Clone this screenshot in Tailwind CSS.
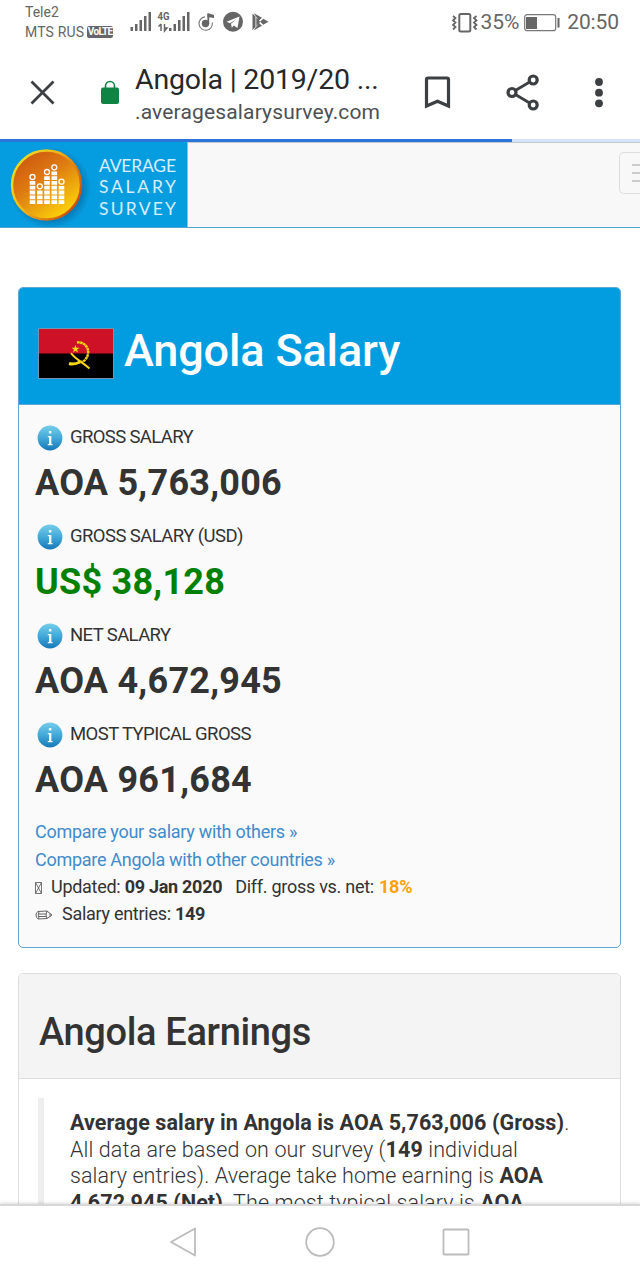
<!DOCTYPE html>
<html lang="en">
<head>
    <meta charset="UTF-8">
    <meta name="viewport" content="width=device-width, initial-scale=1.0">
    <title>Angola | 2019/20 Average Salary Survey</title>
    <script src="https://cdn.jsdelivr.net/npm/@tailwindcss/browser@4"></script>
</head>
<body class="bg-white font-[Roboto,sans-serif] text-[#333] whitespace-nowrap">
<!-- Shared info icon -->
<svg class="absolute w-0 h-0"><defs>
    <linearGradient id="ball" x1="0" y1="0" x2="0" y2="1"><stop offset="0" stop-color="#74cdea"/><stop offset=".5" stop-color="#43a9d8"/><stop offset="1" stop-color="#1678b8"/></linearGradient>
    <symbol id="info" viewBox="0 0 26 26"><circle cx="13" cy="13" r="12.400" fill="url(#ball)"/><path fill="#eef8fc" d="M11.900 6h2.500v2.600h-2.500zM10.800 11h3.600v8h1.200v1.300h-4.800V19h1.200v-6.700h-1.200z"/></symbol>
</defs></svg>
<div class="w-[640px] h-[1280px] flex flex-col overflow-hidden">

    <!-- Status bar -->
    <div class="h-11 shrink-0 flex text-[#666]">
        <div class="w-[130px] pl-[25px] pt-[2px] text-[14px] leading-5">
            <div>Tele2</div>
            <div class="flex items-center gap-[3px]">
                <span class="tracking-[0.15px]">MTS RUS</span>
                <span class="w-[26px] h-3 rounded-[2px] bg-[#666] text-white text-[10px] leading-3 font-bold text-center tracking-[-0.7px]">VoLTE</span>
            </div>
        </div>
        <svg class="w-[150px] h-11" viewBox="130 0 150 44" fill="#666">
            <path d="M130.500 27h2.500v4h-2.500zM135 24h2.500v7H135zM139.500 20h2.500v11h-2.500zM144 16h2.500v15h-2.500zM148.500 12h2.500v19h-2.500z"/>
            <text x="157.500" y="20" font-size="11.500" font-weight="700" textLength="12" lengthAdjust="spacingAndGlyphs">4G</text>
            <path d="M161 24v7M158.500 26.500l2.500-2.500M164.500 24v7l2.500-3h-2.500" fill="none" stroke="#666" stroke-width="1.500"/>
            <path d="M169 28h2.500v3H169zM173.500 24h2.500v7h-2.500zM178 20h2.500v11H178zM182.500 16h2.500v15h-2.500zM187 12h2.500v19H187z"/>
            <circle cx="205.500" cy="23.500" r="3.700"/>
            <path d="M208.300 24V14" fill="none" stroke="#666" stroke-width="1.800"/>
            <path d="M207.500 13l6.500 2v3l-6.500-1z"/>
            <path d="M205 16.900a6.700 6.700 0 1 0 7.300 5.500" fill="none" stroke="#777" stroke-width="1.100"/>
            <circle cx="233" cy="21.700" r="10"/>
            <path d="M226.500 21.800l13-5.300-2 11.500-3.700-2.500-2 2.200-.8-4 5.500-4.500-6.500 4z" fill="#fff"/>
            <path d="M252.500 13.500v16.500l3-3V16.500zM253.500 13l8.500 4.800-3 2.700zM253.500 30.500l8.500-4.800-3-2.700zM263.200 18.700l5.300 3-5.300 3-3-3zM256.300 17.500l4 4.200-4 4.300z"/>
        </svg>
        <div class="ml-auto mr-[21px] pt-px flex items-center text-[21px] tracking-[-0.1px]">
            <svg class="w-[27px] h-6" viewBox="449 10 27 24" fill="none" stroke="#666">
                <rect x="457.300" y="13" width="11" height="17.500" rx="1.500" stroke-width="2"/>
                <path d="M451 15l2.500 2-2.500 2.500 2.500 2-2.500 2.500 2.500 2-2.500 2.500M474.500 15l-2.500 2 2.500 2.500-2.500 2 2.500 2.500-2.500 2 2.500 2.500" stroke-width="1.800"/>
            </svg>
            <span class="ml-[3px]">35%</span>
            <svg class="w-9 h-[18px] ml-[5px]" viewBox="0 0 36 18">
                <rect x=".7" y=".7" width="31" height="16" rx="2.500" fill="none" stroke="#777" stroke-width="1.200"/>
                <path fill="#666" d="M2 3h11v12H2zM33.500 4h2v9.500h-2z"/>
            </svg>
            <span class="ml-[7px]">20:50</span>
        </div>
    </div>

    <!-- Browser toolbar -->
    <div class="h-[95px] shrink-0 flex text-[#3c4043]">
        <svg class="w-[135px] h-[95px]" viewBox="0 44 135 95">
            <path d="M31.500 81.500l22 22M53.500 81.500l-22 22" stroke="#3c4043" stroke-width="2.800"/>
            <rect x="101" y="87.500" width="18" height="16.500" rx="2" fill="#0d8443"/>
            <path d="M105.500 88v-2a4.500 4.500 0 0 1 9 0v2" fill="none" stroke="#0d8443" stroke-width="1.600"/>
        </svg>
        <div class="w-[265px] pt-[18px]">
            <div class="text-[28.500px] leading-[35px] tracking-[-0.2px] text-[#26282b]">Angola | 2019/20 ...</div>
            <div class="text-[21px] leading-[30px] tracking-[0.15px] text-[#4d5054]">.averagesalarysurvey.com</div>
        </div>
        <svg class="w-[240px] h-[95px]" viewBox="400 44 240 95" fill="none" stroke="#3c4043">
            <path d="M426.500 106V79.500q0-1.500 1.500-1.500h19q1.500 0 1.500 1.500V106l-11-4.800z" stroke-width="3.200"/>
            <path d="M533 80l-21 12.500L533 105" stroke-width="2.800"/>
            <g fill="#fff" stroke-width="3.200"><circle cx="533.200" cy="80" r="4"/><circle cx="512" cy="92.500" r="4"/><circle cx="533.200" cy="105" r="4"/></g>
            <g fill="#3c4043" stroke="none"><circle cx="599" cy="82" r="3.900"/><circle cx="599" cy="92.700" r="3.900"/><circle cx="599" cy="103.300" r="3.900"/></g>
        </svg>
    </div>
    <div class="h-[3px] shrink-0 bg-[#d2e3fa]"><div class="h-full w-[512px] bg-[#2b74d9]"></div></div>

    <!-- Page -->
    <div class="h-[1062px] shrink-0 overflow-hidden">
        <div class="h-[86px] flex bg-[#f8f8f8] border-b border-[#4fa3cf] border-t border-t-[#c5c8cc]">
            <div class="w-[188px] -mt-px bg-[#069de0] border-r border-[#7fc4e4]">
                <svg class="w-[187px] h-[85px]" viewBox="0 142 187 85">
                    <defs>
                        <linearGradient id="coin" x1=".1" y1="0" x2=".8" y2="1"><stop offset="0" stop-color="#c9500f"/><stop offset=".45" stop-color="#df7d12"/><stop offset="1" stop-color="#ffdd08"/></linearGradient>
                        <linearGradient id="rim" x1="0" y1="0" x2="1" y2=".6"><stop offset="0" stop-color="#e4ee20"/><stop offset=".5" stop-color="#f0b51c"/><stop offset="1" stop-color="#d0520d"/></linearGradient>
                        <radialGradient id="shade"><stop offset=".75" stop-color="#055f94" stop-opacity=".6"/><stop offset="1" stop-color="#055f94" stop-opacity="0"/></radialGradient>
                    </defs>
                    <circle cx="50" cy="188" r="41" fill="url(#shade)"/>
                    <circle cx="46.500" cy="185" r="34.500" fill="url(#coin)" stroke="url(#rim)" stroke-width="2.400"/>
                    <g stroke="#fff" stroke-width="5.600" stroke-dasharray="3.800 1">
                        <path d="M32.500 204v-23M39.800 204v-14M47 204v-28M54.300 204v-33M61.500 204v-18"/>
                    </g>
                    <g fill="none" stroke="#fff" stroke-width="1.300"><circle cx="32.500" cy="177" r="2.500"/><circle cx="39.800" cy="186.300" r="2.500"/><circle cx="47" cy="172" r="2.500"/><circle cx="54.300" cy="167.300" r="2.500"/><circle cx="61.500" cy="181.700" r="2.500"/></g>
                    <g fill="#d5effb" font-family="Lato" font-size="17.500">
                        <text x="99" y="172" textLength="77">AVERAGE</text>
                        <text x="99" y="193" textLength="77">SALARY</text>
                        <text x="99" y="214.500" textLength="77">SURVEY</text>
                    </g>
                </svg>
            </div>
            <div class="ml-auto mt-[9px] w-[21px] h-[42px] border border-r-0 border-[#ddd] rounded-l-[5px] pl-3 flex flex-col justify-center gap-[6px]">
                <div class="h-[2px] bg-[#ccc]"></div>
                <div class="h-[2px] bg-[#ccc]"></div>
                <div class="h-[2px] bg-[#ccc]"></div>
            </div>
        </div>

        <!-- Salary panel -->
        <div class="mt-[59px] ml-[18px] w-[603px] h-[661px] border border-[#61a5d4] rounded-[5px] bg-[#fafafa] overflow-hidden">
            <div class="h-[117px] pl-[19px] pt-[8px] flex items-center bg-[#029de1] border-b border-[#61a5d4]">
                <svg class="w-[76px] h-[51px] mt-[6px]" viewBox="0 0 76 51">
                    <rect x=".5" y=".5" width="75" height="50" stroke="#7396ad"/>
                    <path fill="#ce1127" d="M1 1h74v24.500H1z"/>
                    <g fill="none" stroke="#f9d616">
                        <path d="M39 14.500c7-1 12 5 11 11-.8 6-5 9.500-10 8.500" stroke-width="2.400" stroke-dasharray="2.600 .5"/>
                        <path d="M33 25c4 6 10 8 18.500 15.500" stroke-width="2"/>
                        <path d="M31 35.500q5 1.500 11-1.500" stroke-width="3"/>
                    </g>
                    <path fill="#f9d616" d="M37.500 17l1 2.700 3 .1-2.400 1.800.9 2.900-2.500-1.700-2.500 1.700.9-2.900-2.400-1.800 3-.1z"/>
                </svg>
                <h1 class="ml-[10px] mt-[2px] text-[45px] leading-[54px] font-medium tracking-[-0.15px] text-white">Angola Salary</h1>
            </div>

            <div class="pl-4 pt-4">
                <div class="h-[98.9px]">
                    <div class="h-8 flex pl-[2px]"><svg class="w-[26px] h-[26px] mt-1"><use href="#info"/></svg><span class="ml-[7px] text-[18.5px] leading-8 tracking-[-0.63px]">GROSS SALARY</span></div>
                    <div class="mt-[8px] text-[36px] leading-[44px] font-bold tracking-[0.25px]">AOA 5,763,006</div>
                </div>
                <div class="h-[98.9px]">
                    <div class="h-8 flex pl-[2px]"><svg class="w-[26px] h-[26px] mt-1"><use href="#info"/></svg><span class="ml-[7px] text-[18.5px] leading-8 tracking-[-0.57px]">GROSS SALARY (USD)</span></div>
                    <div class="mt-[8px] text-[36px] leading-[44px] font-bold tracking-[0.25px] text-[#008000]">US$ 38,128</div>
                </div>
                <div class="h-[98.9px]">
                    <div class="h-8 flex pl-[2px]"><svg class="w-[26px] h-[26px] mt-1"><use href="#info"/></svg><span class="ml-[7px] text-[18.5px] leading-8 tracking-[-0.6px]">NET SALARY</span></div>
                    <div class="mt-[8px] text-[36px] leading-[44px] font-bold tracking-[0.25px]">AOA 4,672,945</div>
                </div>
                <div class="h-[98.9px]">
                    <div class="h-8 flex pl-[2px]"><svg class="w-[26px] h-[26px] mt-1"><use href="#info"/></svg><span class="ml-[7px] text-[18.5px] leading-8 tracking-[-0.57px]">MOST TYPICAL GROSS</span></div>
                    <div class="mt-[8px] text-[36px] leading-[44px] font-bold tracking-[0.25px]">AOA 961,684</div>
                </div>
                <div class="text-[18px] leading-[27.3px] pt-[1.8px] tracking-[-0.28px]">
                    <div class="text-[#428bca]">Compare your salary with others »</div>
                    <div class="text-[#428bca]">Compare Angola with other countries »</div>
                    <div class="flex items-center">
                        <svg class="w-[7px] h-3 mr-[9px] mt-[3px]" viewBox="0 0 7 12" fill="none" stroke="#555" stroke-width=".8"><path d="M.5.5h6v11h-6zM.5.5l6 11M6.500.5l-6 11"/></svg>
                        <span>Updated: <b>09 Jan 2020</b></span><span class="ml-[13px]">Diff. gross vs. net: <b class="ml-px text-[#ffa10a]">18%</b></span>
                    </div>
                    <div class="flex items-center">
                        <svg class="w-[18px] h-3 mr-[9px] mt-[3px]" viewBox="0 0 18 12" fill="none" stroke="#555" stroke-width=".9"><path d="M3 2.500l9-.5 5 4-5 3.500-9 .5Q1 8.500 1 6t2-3.500zM4 2.500Q2.500 6 4 9.500M12 2q-2 4 0 7.500M4 5h7M4 7.500h7M15 4.500v3"/></svg>
                        <span>Salary entries: <b>149</b></span>
                    </div>
                </div>
            </div>
        </div>

        <!-- Earnings panel -->
        <div class="mt-[25px] ml-[18px] w-[603px] h-[400px] border border-[#ddd] rounded-[5px]">
            <div class="h-[105px] pl-5 pt-[30px] bg-[#f4f4f4] border-b border-[#ddd] rounded-t-[4px]">
                <h2 class="text-[38px] leading-[56px] font-medium tracking-[-0.35px]">Angola Earnings</h2>
            </div>
            <div class="mt-[19px] ml-[19px] h-[280px] border-l-[6px] border-[#eee] pl-[26px] pt-[12px] text-[21.500px] leading-[26.6px] font-light tracking-[0.1px]">
                <div><b class="font-bold">Average salary in Angola is AOA 5,763,006 (Gross)</b>.</div>
                <div>All data are based on our survey (<b class="font-bold">149</b> individual</div>
                <div>salary entries). Average take home earning is <b class="font-bold">AOA</b></div>
                <div><b class="font-bold">4,672,945 (Net)</b>. The most typical salary is <b class="font-bold">AOA</b></div>
            </div>
        </div>
    </div>

    <!-- Navigation bar -->
    <div class="h-[76px] shrink-0 relative z-10 bg-white border-t-2 border-[#d8d8d8] shadow-[0_-1px_3px_rgba(0,0,0,0.15)]">
        <svg class="w-[640px] h-[74px]" viewBox="0 1206 640 74" fill="none" stroke="#bcbcbc" stroke-width="1.800" stroke-linejoin="round">
            <path d="M171 1242l24-13.500v27z"/>
            <circle cx="320" cy="1242" r="13.800"/>
            <rect x="443.500" y="1229.500" width="25" height="25" rx=".8"/>
        </svg>
    </div>
</div>
</body>
</html>
